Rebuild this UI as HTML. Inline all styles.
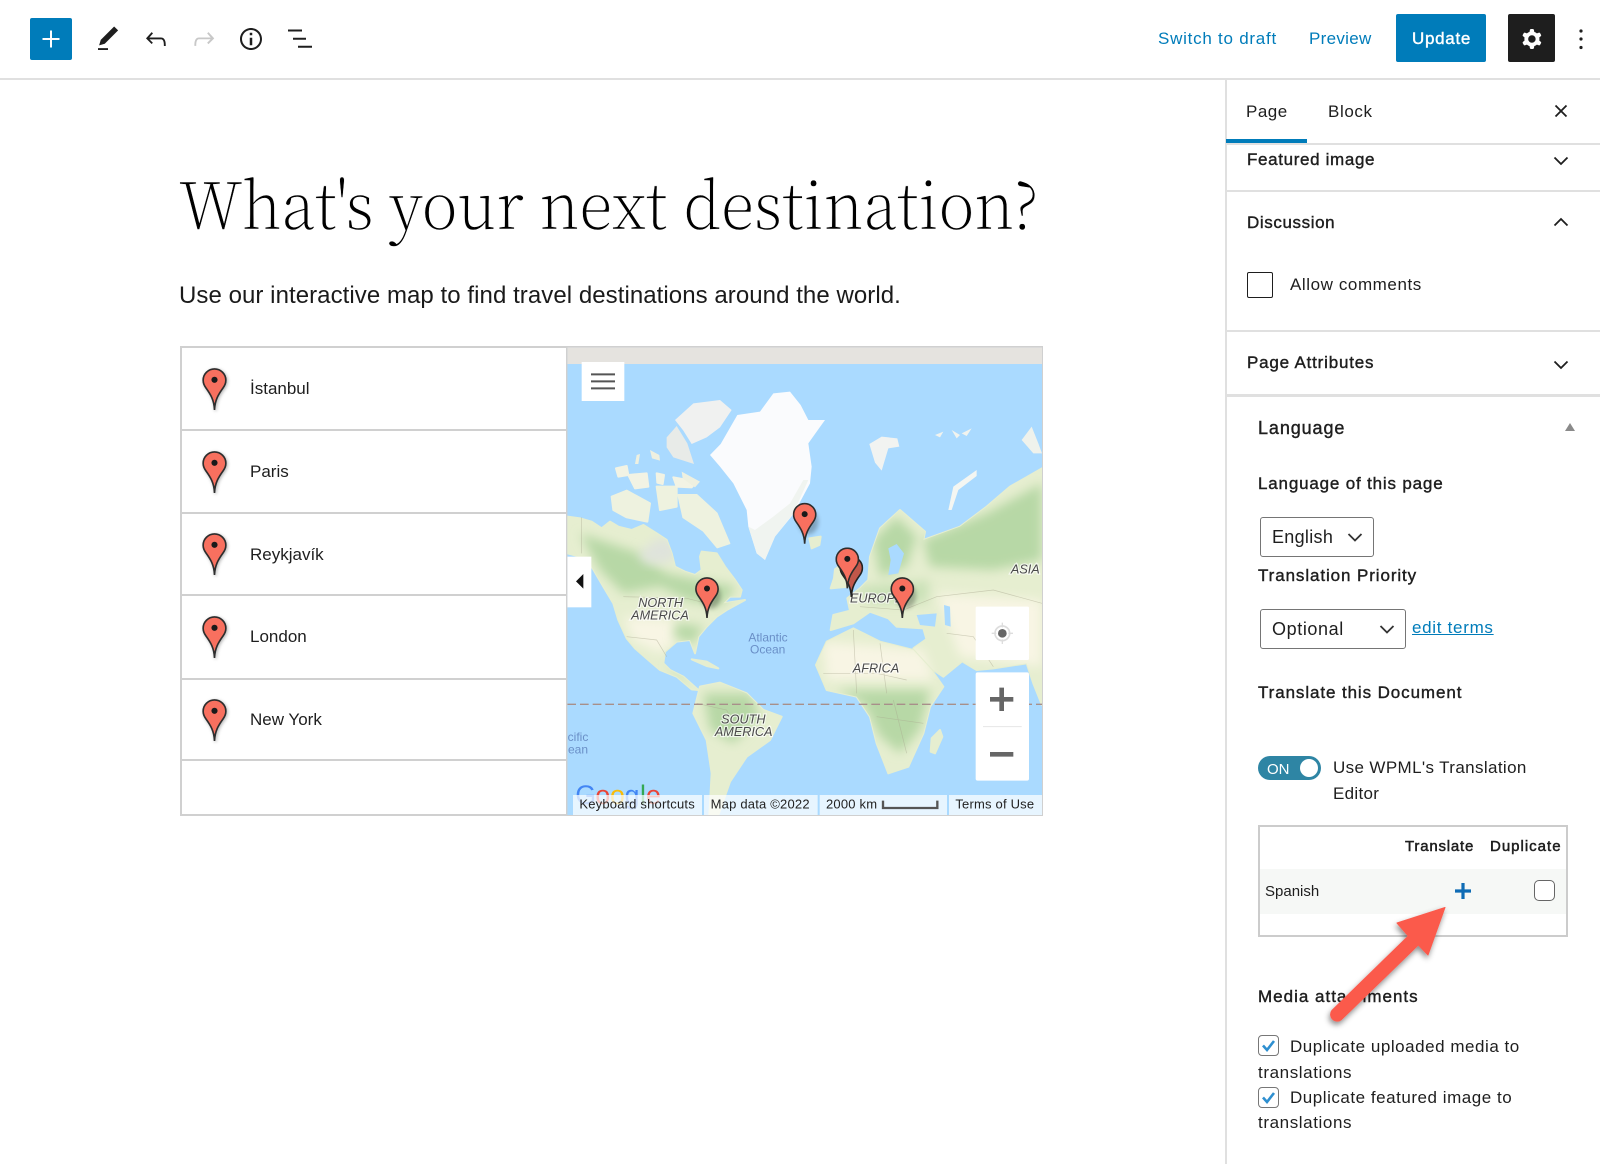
<!DOCTYPE html>
<html lang="en"><head><meta charset="utf-8"><title>Edit page</title>
<style>
html,body{margin:0;padding:0;background:#fff}
body{width:1600px;height:1164px;overflow:hidden;position:relative;font-family:"Liberation Sans",sans-serif;color:#1e1e1e}
.a{position:absolute}
.t{position:absolute;white-space:nowrap;line-height:24px;font-size:17px;margin-top:1px}
.m{-webkit-text-stroke:.4px currentColor}
.line{position:absolute;background:#e0e0e0}
.sel{position:absolute;box-sizing:border-box;border:1.5px solid #757575;border-radius:3px;background:#fff}
.row{position:absolute;left:181px;width:386px;height:2px;background:#d0d0d0}
.lp{filter:drop-shadow(1.5px 1px 1.5px rgba(0,0,0,.3))}
svg{position:absolute;display:block;overflow:visible}
</style></head><body>

<!-- top bar -->
<div class="a" style="left:30px;top:18px;width:42px;height:42px;background:#007cba;border-radius:2px"></div>
<svg style="left:36px;top:24px" width="30" height="30" viewBox="0 0 30 30"><path d="M15 6.5v17M6.5 15h17" stroke="#fff" stroke-width="2"/></svg>
<svg style="left:93px;top:24px" width="30" height="30" viewBox="0 0 24 24"><path fill="#1e1e1e" d="M20.1 5.1L16.9 2 6.2 12.7l-1.3 4.4 4.5-1.3L20.1 5.1zM4 20.8h8v-1.5H4v1.5z"/></svg>
<svg style="left:141px;top:24px" width="30" height="30" viewBox="0 0 24 24"><path fill="#1e1e1e" d="M18.3 11.7c-.6-.6-1.4-.9-2.3-.9H6.7l2.9-3.3-1.1-1-4.5 5L8.5 16l1-1-2.7-2.7H16c.5 0 .9.2 1.3.5 1 1 1 3.4 1 4.5v.3h1.5v-.2c0-1.5 0-4.3-1.5-5.7z"/></svg>
<svg style="left:189px;top:24px" width="30" height="30" viewBox="0 0 24 24"><path fill="#c8c8c8" d="M15.6 6.5l-1.1 1 2.9 3.3H8c-.9 0-1.7.3-2.3.9-1.4 1.5-1.4 4.2-1.4 5.6v.2h1.5v-.3c0-1.1 0-3.5 1-4.5.3-.3.7-.5 1.3-.5h9.2L14.5 15l1.1 1.1 4.6-4.6-4.6-5z"/></svg>
<svg style="left:236px;top:24px" width="30" height="30" viewBox="0 0 24 24"><path fill="#1e1e1e" d="M12 3.2c-4.8 0-8.8 3.9-8.8 8.8 0 4.8 3.9 8.8 8.8 8.8 4.8 0 8.8-3.9 8.8-8.8 0-4.8-4-8.8-8.8-8.8zm0 16c-4 0-7.2-3.3-7.2-7.2C4.8 8 8 4.8 12 4.8s7.2 3.3 7.2 7.2c0 4-3.2 7.2-7.2 7.2zM11 17h2v-6h-2v6zm0-8h2V7h-2v2z"/></svg>
<svg style="left:280px;top:24px" width="40" height="30" viewBox="0 0 40 30"><path d="M8 6.5h14M13 14.700h13M18 22.800h14" stroke="#1e1e1e" stroke-width="2"/></svg>

<div class="t" style="left:1158px;top:26px;color:#007cba;letter-spacing:.75px">Switch to draft</div>
<div class="t" style="left:1309px;top:26px;color:#007cba;letter-spacing:.3px">Preview</div>
<div class="a" style="left:1396px;top:14px;width:90px;height:48px;background:#007cba;border-radius:2px"></div>
<div class="t m" style="left:1412px;top:26px;color:#fff;letter-spacing:.7px">Update</div>
<div class="a" style="left:1508px;top:14px;width:47px;height:48px;background:#1e1e1e;border-radius:2px"></div>
<svg style="left:1517px;top:24px" width="30" height="30" viewBox="0 0 24 24"><path fill="#fff" fill-rule="evenodd" d="M10.289 4.836A1 1 0 0111.275 4h1.306a1 1 0 01.987.836l.244 1.466c.787.26 1.503.679 2.108 1.218l1.393-.522a1 1 0 011.216.437l.653 1.13a1 1 0 01-.23 1.273l-1.148.944a6.025 6.025 0 010 2.435l1.149.946a1 1 0 01.23 1.272l-.653 1.13a1 1 0 01-1.216.437l-1.394-.522c-.605.54-1.32.958-2.108 1.218l-.244 1.466a1 1 0 01-.987.836h-1.306a1 1 0 01-.986-.836l-.244-1.466a5.995 5.995 0 01-2.108-1.218l-1.394.522a1 1 0 01-1.217-.436l-.653-1.131a1 1 0 01.23-1.272l1.149-.946a6.026 6.026 0 010-2.435l-1.148-.944a1 1 0 01-.23-1.272l.653-1.131a1 1 0 011.217-.437l1.393.522a5.994 5.994 0 012.108-1.218l.244-1.466zM14.929 12a3 3 0 11-6 0 3 3 0 016 0z"/></svg>
<svg style="left:1576px;top:26px" width="10" height="26" viewBox="0 0 10 26"><circle cx="5" cy="5" r="1.6" fill="#1e1e1e"/><circle cx="5" cy="13" r="1.6" fill="#1e1e1e"/><circle cx="5" cy="21.5" r="1.6" fill="#1e1e1e"/></svg>
<div class="line" style="left:0;top:78px;width:1600px;height:2px"></div>

<!-- main content -->
<div class="a" style="left:179px;top:156px;white-space:nowrap;font-family:'Noto Serif CJK SC','Liberation Serif',serif;font-weight:200;font-size:65px;line-height:90px;color:#000;-webkit-text-stroke:.45px #fff;transform:scaleX(.94);transform-origin:0 0">What's your next destination?</div>
<div class="t" style="left:179px;top:280px;font-size:24px;line-height:30px;color:#1a1a1a;letter-spacing:.06px">Use our interactive map to find travel destinations around the world.</div>

<!-- map block -->
<div class="a" style="left:179.5px;top:346px;width:863.5px;height:470px;box-sizing:border-box;border:2px solid #d0d0d0;background:#fff"></div>
<div class="row" style="top:429px"></div>
<div class="row" style="top:512px"></div>
<div class="row" style="top:594px"></div>
<div class="row" style="top:678px"></div>
<div class="row" style="top:759px"></div>
<div class="a" style="left:566px;top:346px;width:2px;height:470px;background:#d0d0d0"></div>

<svg width="0" height="0" style="left:0;top:0"><defs>
<symbol id="pin" viewBox="0 0 24 42"><path d="M12 41C11.6 31 8 25.5 3.6 19.4 1.7 16.8.9 14.4.9 12a11.1 11.1 0 0 1 22.2 0c0 2.4-.8 4.8-2.7 7.4C16 25.5 12.4 31 12 41z" fill="#f8705f" stroke="#2d2d2d" stroke-width="1.6"/><circle cx="12" cy="11.5" r="3" fill="#1a1a1a"/></symbol>
<filter id="bl" x="-30%" y="-30%" width="160%" height="160%"><feGaussianBlur stdDeviation="16"/></filter>
<filter id="ps" x="-30%" y="-30%" width="170%" height="170%"><feGaussianBlur stdDeviation="6"/></filter>
<filter id="as" x="-20%" y="-20%" width="150%" height="150%"><feDropShadow dx="-1" dy="3" stdDeviation="3" flood-color="#000" flood-opacity=".45"/></filter>
<clipPath id="mc"><rect x="22" y="22" width="1424" height="1403"/></clipPath>
<clipPath id="lc"><path d="M22 530 60 535 95 545 125 565 150 545 175 560 215 570 250 555 290 580 320 600 335 640 345 680 375 695 405 705 425 690 420 650 425 635 470 640 495 680 525 720 545 750 540 770 510 770 490 790 555 780 500 810 470 830 440 860 415 890 405 940 390 900 350 905 315 935 310 970 330 990 370 1010 415 1050 395 1048 350 1010 300 990 265 960 225 925 200 895 175 840 160 790 130 740 95 680 60 650 22 640zM420 1040 480 1028 560 1060 610 1110 665 1130 630 1200 560 1250 510 1325 475 1425 448 1425 455 1300 440 1200 400 1120zM768 975 800 905 880 865 960 905 1060 930 1115 990 1150 1040 1110 1100 1090 1180 1045 1280 985 1300 950 1210 930 1130 890 1070 800 1050zM812 870 820 825 870 812 862 775 900 745 925 720 930 650 960 565 1020 510 1095 575 1090 600 1200 560 1280 500 1350 440 1446 385 1446 1095 1420 1030 1400 970 1300 985 1250 990 1200 960 1150 1000 1100 900 1090 865 1010 860 985 835 930 815 880 850zM1060 925 1110 890 1180 945 1205 965 1150 1010 1120 990z"/></clipPath>
</defs></svg>

<svg class="lp" style="left:202px;top:368px" width="25" height="43"><use href="#pin"/></svg>
<svg class="lp" style="left:202px;top:451px" width="25" height="43"><use href="#pin"/></svg>
<svg class="lp" style="left:202px;top:533px" width="25" height="43"><use href="#pin"/></svg>
<svg class="lp" style="left:202px;top:616px" width="25" height="43"><use href="#pin"/></svg>
<svg class="lp" style="left:202px;top:699px" width="25" height="43"><use href="#pin"/></svg>
<div class="t" style="left:250px;top:376px">İstanbul</div>
<div class="t" style="left:250px;top:459px">Paris</div>
<div class="t" style="left:250px;top:542px">Reykjavík</div>
<div class="t" style="left:250px;top:624px">London</div>
<div class="t" style="left:250px;top:707px">New York</div>

<svg style="left:560px;top:340px" width="490" height="490" viewBox="0 0 1470 1470" font-family="Liberation Sans, sans-serif">
<g clip-path="url(#mc)">
<rect x="22" y="22" width="1424" height="1403" fill="#aadaff"/>
<rect x="22" y="22" width="1424" height="50" fill="#e5e3df"/>
<!-- land -->
<g fill="#e6eed0" stroke="#e6eed0" stroke-width="6" stroke-linejoin="round">
<path d="M22 530 60 535 95 545 125 565 150 545 175 560 215 570 250 555 290 580 320 600 335 640 345 680 375 695 405 705 425 690 420 650 425 635 470 640 495 680 525 720 545 750 540 770 510 770 490 790 555 780 500 810 470 830 440 860 415 890 405 940 390 900 350 905 315 935 310 970 330 990 370 1010 415 1050 395 1048 350 1010 300 990 265 960 225 925 200 895 175 840 160 790 130 740 95 680 60 650 22 640z"/>
<path d="M420 1040 480 1028 560 1060 610 1110 665 1130 630 1200 560 1250 510 1325 475 1425 448 1425 455 1300 440 1200 400 1120z"/>
<path d="M768 975 800 905 880 865 960 905 1060 930 1115 990 1150 1040 1110 1100 1090 1180 1045 1280 985 1300 950 1210 930 1130 890 1070 800 1050z"/>
<path d="M812 870 820 825 870 812 862 775 900 745 925 720 930 650 960 565 1020 510 1095 575 1090 600 1200 560 1280 500 1350 440 1446 385 1446 1095 1420 1030 1400 970 1300 985 1250 990 1200 960 1150 1000 1100 900 1090 865 1010 860 985 835 930 815 880 850z"/>
<path d="M1060 925 1110 890 1180 945 1205 965 1150 1010 1120 990z"/>
<path d="M825 688 850 670 865 740 812 745 822 715z"/>
<path d="M748 595 782 590 778 615 755 625z"/>
<path d="M1115 1195 1140 1170 1147 1190 1125 1240 1112 1235z"/>
<path d="M395 958 440 965 475 985 440 978z"/>
<path d="M155 470 200 452 270 490 262 545 200 532 160 510z" fill="#eef2df" stroke="#eef2df"/>
<path d="M355 465 410 465 470 520 508 610 472 622 430 572 370 532z" fill="#eef2df" stroke="#eef2df"/>
<path d="M290 440 350 440 350 500 300 510z" fill="#eef2df" stroke="#eef2df"/>
<path d="M205 405 260 400 265 440 225 445zM168 385 200 378 205 405 175 410zM290 400 312 405 308 432 292 428zM340 412 410 425 395 442 350 440z" fill="#f2f3e4" stroke="#f2f3e4"/>
</g>
<g clip-path="url(#lc)">
<g fill="#f8f5e4" filter="url(#bl)">
<path d="M790 905 1090 930 1120 1020 800 1020z"/>
<path d="M1130 760 1446 780 1446 980 1200 950z"/>
<path d="M190 830 340 840 350 900 300 940 220 900z"/>
</g>
<g fill="#b7d8a6" filter="url(#bl)">
<path d="M60 580 240 640 320 700 420 720 530 740 480 800 380 780 300 740 190 760 120 690z"/>
<path d="M350 850 430 860 400 910 340 890z"/>
<path d="M320 970 400 1040 350 1010z"/>
<path d="M430 1060 570 1060 600 1130 520 1210 450 1170z"/>
<path d="M830 1050 1110 1050 1080 1170 1020 1240 960 1190 910 1090z"/>
<path d="M1090 600 1280 520 1446 430 1446 660 1300 690 1110 680z"/>
<path d="M940 600 1010 530 1070 590 1040 680 960 710z"/>
<path d="M880 740 1110 720 1100 790 930 790z" opacity=".6"/>
</g>
<path d="M235 640 300 590 370 620 325 670 255 670z" fill="#dfe3dc" filter="url(#bl)"/>
</g>
<!-- inland water -->
<g fill="#aadaff"><path d="M985 625 1010 612 1032 640 1015 700 985 705 992 660z"/><path d="M1070 825 1130 820 1125 860 1080 855z"/><path d="M1152 795 1170 800 1172 860 1155 855z"/></g>
<!-- ice -->
<path d="M450 345 482 312 532 225 600 215 640 160 690 155 722 195 745 240 795 240 770 275 745 310 755 380 750 430 702 520 645 590 615 660 590 640 565 560 560 510 520 430 480 380z" fill="#fafbfd"/>
<path d="M745 420 700 520 645 590 615 660 590 640 565 560 585 570 640 530 690 490 730 420z" fill="#eef2ec" opacity=".8"/>
<path d="M345 240 400 190 480 180 515 210 480 262 440 292 395 312 370 272z" fill="#f0f1f0"/>
<path d="M320 292 350 258 382 310 402 372 340 352 320 322z" fill="#e8ebe8"/>
<path d="M270 330 298 345 300 362 276 355zM230 345 240 342 235 372 225 372zM365 395 420 425 405 442 368 415z" fill="#eef0e0"/>
<path d="M928 312 965 290 1012 295 1018 320 985 325 965 392 945 368z" fill="#f1f3f1"/>
<path d="M1165 510 1180 440 1250 390 1250 408 1195 450 1175 510z" fill="#f4f6f2"/>
<path d="M1385 300 1415 260 1435 310 1446 340 1420 340z" fill="#eff2ec"/>
<path d="M1125 285 1150 275 1140 292zM1175 270 1200 285 1190 295zM1205 280 1235 265 1220 288z" fill="#f1f3ee"/>
<!-- borders -->
<g fill="none" stroke="#a9a890" stroke-width="2" opacity=".5">
<path d="M65 532V640M190 770 380 775 440 790M200 890 290 900 320 950M410 1090 500 1110 540 1190M790 1000 950 1000 1040 1020M880 870 890 1060M960 910 980 1060M1000 1080 1040 1240M950 1130 1090 1150M900 800 1030 810 1130 770 1300 750 1446 790M1160 880 1240 890 1300 980"/>
</g>
<!-- equator -->
<path d="M22 1093H1446" stroke="#a88f8a" stroke-width="4" stroke-dasharray="26 12" fill="none"/>
<!-- map text -->
<g font-style="italic" font-size="38" fill="#4a4a4a" stroke="#fff" stroke-width="7" stroke-opacity=".7" paint-order="stroke" text-anchor="middle">
<text x="302" y="801">NORTH</text><text x="300" y="839">AMERICA</text>
<text x="550" y="1150">SOUTH</text><text x="551" y="1188">AMERICA</text>
<text x="948" y="997">AFRICA</text><text x="950" y="788">EUROPE</text><text x="1396" y="700">ASIA</text>
</g>
<g font-size="36" fill="#6a8fc7" text-anchor="middle"><text x="624" y="904">Atlantic</text><text x="623" y="940">Ocean</text><text x="54" y="1203">cific</text><text x="54" y="1240">ean</text></g>
<!-- pins -->
<g filter="url(#ps)" fill="#000" opacity=".25"><ellipse cx="745" cy="545" rx="30" ry="38"/><ellipse cx="452" cy="768" rx="30" ry="38"/><ellipse cx="1038" cy="768" rx="30" ry="38"/></g>
<g style="filter:brightness(.78)"><use href="#pin" x="838" y="648" width="72" height="126"/></g>
<use href="#pin" x="826" y="622" width="72" height="126"/>
<use href="#pin" x="698" y="488" width="72" height="126"/>
<use href="#pin" x="405" y="711" width="72" height="126"/>
<use href="#pin" x="991" y="711" width="72" height="126"/>
<!-- google + attribution -->
<g font-size="80"><text x="46" y="1392" fill="#4285f4">G</text><text x="106" y="1392" fill="#ea4335">o</text><text x="150" y="1392" fill="#fbbc05">o</text><text x="194" y="1392" fill="#4285f4">g</text><text x="240" y="1392" fill="#34a853">l</text><text x="258" y="1392" fill="#ea4335">e</text></g>
<g fill="#fff" fill-opacity=".72"><rect x="39" y="1365" width="387" height="60"/><rect x="432" y="1365" width="341" height="60"/><rect x="779" y="1365" width="382" height="60"/><rect x="1167" y="1365" width="279" height="60"/></g>
<g font-size="39" fill="#222" letter-spacing=".6"><text x="58" y="1406">Keyboard shortcuts</text><text x="452" y="1406">Map data ©2022</text><text x="798" y="1406">2000 km</text><text x="1186" y="1406">Terms of Use</text></g>
<path d="M969 1382V1404H1132V1382" fill="none" stroke="#555" stroke-width="7"/>
<!-- controls -->
<rect x="65" y="66" width="128" height="117" fill="#fff"/>
<path d="M93 103H165M93 124H165M93 145H165" stroke="#555" stroke-width="6"/>
<rect x="22" y="650" width="72" height="152" fill="#fff"/>
<path d="M70 702V746L48 724z" fill="#111"/>
<rect x="1247" y="800" width="160" height="160" rx="4" fill="#fff"/>
<circle cx="1327" cy="880" r="22" fill="none" stroke="#ddd" stroke-width="5"/><path d="M1327 848V862M1327 898V912M1295 880H1309M1345 880H1359" stroke="#ddd" stroke-width="4"/><circle cx="1327" cy="880" r="13" fill="#666"/>
<rect x="1247" y="997" width="160" height="325" rx="6" fill="#fff"/>
<path d="M1290 1078H1360M1325 1043V1113M1290 1243H1360" stroke="#666" stroke-width="14"/>
<path d="M1269 1160H1385" stroke="#e6e6e6" stroke-width="3"/>
</g>
</svg>

<!-- sidebar -->
<div class="line" style="left:1225px;top:80px;width:1.5px;height:1084px"></div>
<div class="t" style="left:1246px;top:99px;letter-spacing:.5px">Page</div>
<div class="t" style="left:1328px;top:99px;letter-spacing:.6px">Block</div>
<div class="a" style="left:1226px;top:139px;width:81px;height:4px;background:#007cba"></div>
<div class="line" style="left:1227px;top:143px;width:373px;height:1.5px"></div>
<svg style="left:1551px;top:101px" width="20" height="20" viewBox="0 0 20 20"><path d="M4.5 4.5 15.500 15.500M15.500 4.500 4.500 15.500" stroke="#1e1e1e" stroke-width="1.8"/></svg>
<div class="t m" style="left:1247px;top:147px;letter-spacing:.65px">Featured image</div>
<svg style="left:1553px;top:156px" width="16" height="10" viewBox="0 0 16 10"><path d="M1.500 1.500 8 8 14.500 1.500" fill="none" stroke="#1e1e1e" stroke-width="1.8"/></svg>
<div class="line" style="left:1227px;top:190px;width:373px;height:1.5px"></div>
<div class="t m" style="left:1247px;top:210px;letter-spacing:.6px">Discussion</div>
<svg style="left:1553px;top:217px" width="16" height="10" viewBox="0 0 16 10"><path d="M1.500 8.500 8 2 14.500 8.500" fill="none" stroke="#1e1e1e" stroke-width="1.8"/></svg>
<div class="a" style="left:1247px;top:272px;width:26px;height:26px;box-sizing:border-box;border:1.5px solid #1e1e1e;border-radius:2px"></div>
<div class="t" style="left:1290px;top:272px;letter-spacing:.58px">Allow comments</div>
<div class="line" style="left:1227px;top:330px;width:373px;height:2px"></div>
<div class="t m" style="left:1247px;top:350px;letter-spacing:.8px">Page Attributes</div>
<svg style="left:1553px;top:360px" width="16" height="10" viewBox="0 0 16 10"><path d="M1.500 1.500 8 8 14.500 1.500" fill="none" stroke="#1e1e1e" stroke-width="1.8"/></svg>
<div class="line" style="left:1227px;top:394px;width:373px;height:3px"></div>

<div class="t m" style="left:1258px;top:415px;font-size:18px;letter-spacing:.9px">Language</div>
<div class="a" style="left:1565px;top:423px;width:0;height:0;border-left:5px solid transparent;border-right:5px solid transparent;border-bottom:8px solid #8a8a8a"></div>
<div class="t m" style="left:1258px;top:471px;letter-spacing:.82px">Language of this page</div>
<div class="sel" style="left:1260px;top:517px;width:114px;height:40px"></div>
<div class="t" style="left:1272px;top:524px;font-size:18px;letter-spacing:.3px">English</div>
<svg style="left:1347px;top:532px" width="16" height="12" viewBox="0 0 16 12"><path d="M1.500 2 8 8.500 14.500 2" fill="none" stroke="#333" stroke-width="1.8"/></svg>
<div class="t m" style="left:1258px;top:563px;letter-spacing:.9px">Translation Priority</div>
<div class="sel" style="left:1260px;top:609px;width:146px;height:40px"></div>
<div class="t" style="left:1272px;top:616px;font-size:18px;letter-spacing:.6px">Optional</div>
<svg style="left:1379px;top:624px" width="16" height="12" viewBox="0 0 16 12"><path d="M1.500 2 8 8.500 14.500 2" fill="none" stroke="#333" stroke-width="1.8"/></svg>
<div class="t" style="left:1412px;top:615px;color:#007cba;text-decoration:underline;letter-spacing:.7px">edit terms</div>
<div class="t m" style="left:1258px;top:680px;letter-spacing:.9px">Translate this Document</div>
<div class="a" style="left:1258px;top:756px;width:63px;height:24px;background:#2e85a4;border-radius:12px"></div>
<div class="a" style="left:1300px;top:759px;width:18px;height:18px;background:#fff;border-radius:50%"></div>
<div class="t" style="left:1267px;top:757px;color:#fff;font-size:15px">ON</div>
<div class="t" style="left:1333px;top:755px;letter-spacing:.37px">Use WPML's Translation</div>
<div class="t" style="left:1333px;top:781px;letter-spacing:.3px">Editor</div>

<div class="a" style="left:1258px;top:825px;width:310px;height:112px;box-sizing:border-box;border:2px solid #ccc"></div>
<div class="a" style="left:1260px;top:869px;width:306px;height:45px;background:#f6f8f6"></div>
<div class="t m" style="left:1405px;top:834px;font-size:15px;letter-spacing:.8px;-webkit-text-stroke-width:.5px">Translate</div>
<div class="t m" style="left:1490px;top:834px;font-size:15px;letter-spacing:1px;-webkit-text-stroke-width:.5px">Duplicate</div>
<div class="t" style="left:1265px;top:879px;font-size:15px">Spanish</div>
<svg style="left:1453px;top:881px" width="20" height="20" viewBox="0 0 20 20"><path d="M10 2V18M2 10H18" stroke="#0f6cb5" stroke-width="3.2"/></svg>
<div class="a" style="left:1534px;top:880px;width:21px;height:21px;box-sizing:border-box;border:1.500px solid #666;border-radius:5px;background:#fff"></div>

<div class="t m" style="left:1258px;top:984px;letter-spacing:1px">Media attachments</div>
<div class="a" style="left:1258px;top:1035px;width:21px;height:21px;box-sizing:border-box;border:1.500px solid #777;border-radius:4px;background:#fff"></div>
<svg style="left:1258px;top:1035px" width="21" height="21" viewBox="0 0 21 21"><path d="M5 10.500 9 15 16 6" fill="none" stroke="#2e8fd0" stroke-width="2.600"/></svg>
<div class="t" style="left:1290px;top:1034px;letter-spacing:.53px">Duplicate uploaded media to</div>
<div class="t" style="left:1258px;top:1060px;letter-spacing:.6px">translations</div>
<div class="a" style="left:1258px;top:1087px;width:21px;height:21px;box-sizing:border-box;border:1.500px solid #777;border-radius:4px;background:#fff"></div>
<svg style="left:1258px;top:1087px" width="21" height="21" viewBox="0 0 21 21"><path d="M5 10.500 9 15 16 6" fill="none" stroke="#2e8fd0" stroke-width="2.600"/></svg>
<div class="t" style="left:1290px;top:1085px;letter-spacing:.53px">Duplicate featured image to</div>
<div class="t" style="left:1258px;top:1110px;letter-spacing:.6px">translations</div>

<!-- annotation arrow -->
<svg style="left:0;top:0" width="1600" height="1164" viewBox="0 0 1600 1164"><g filter="url(#as)"><path d="M1445 907.500 1397 923 1408.300 936 1332 1010.300A6.700 6.700 0 0 0 1341.400 1019.700L1418.300 945 1428 955z" fill="#fb5a4c" stroke="#fb5a4c" stroke-width="1" stroke-linejoin="round"/></g></svg>
</body></html>
